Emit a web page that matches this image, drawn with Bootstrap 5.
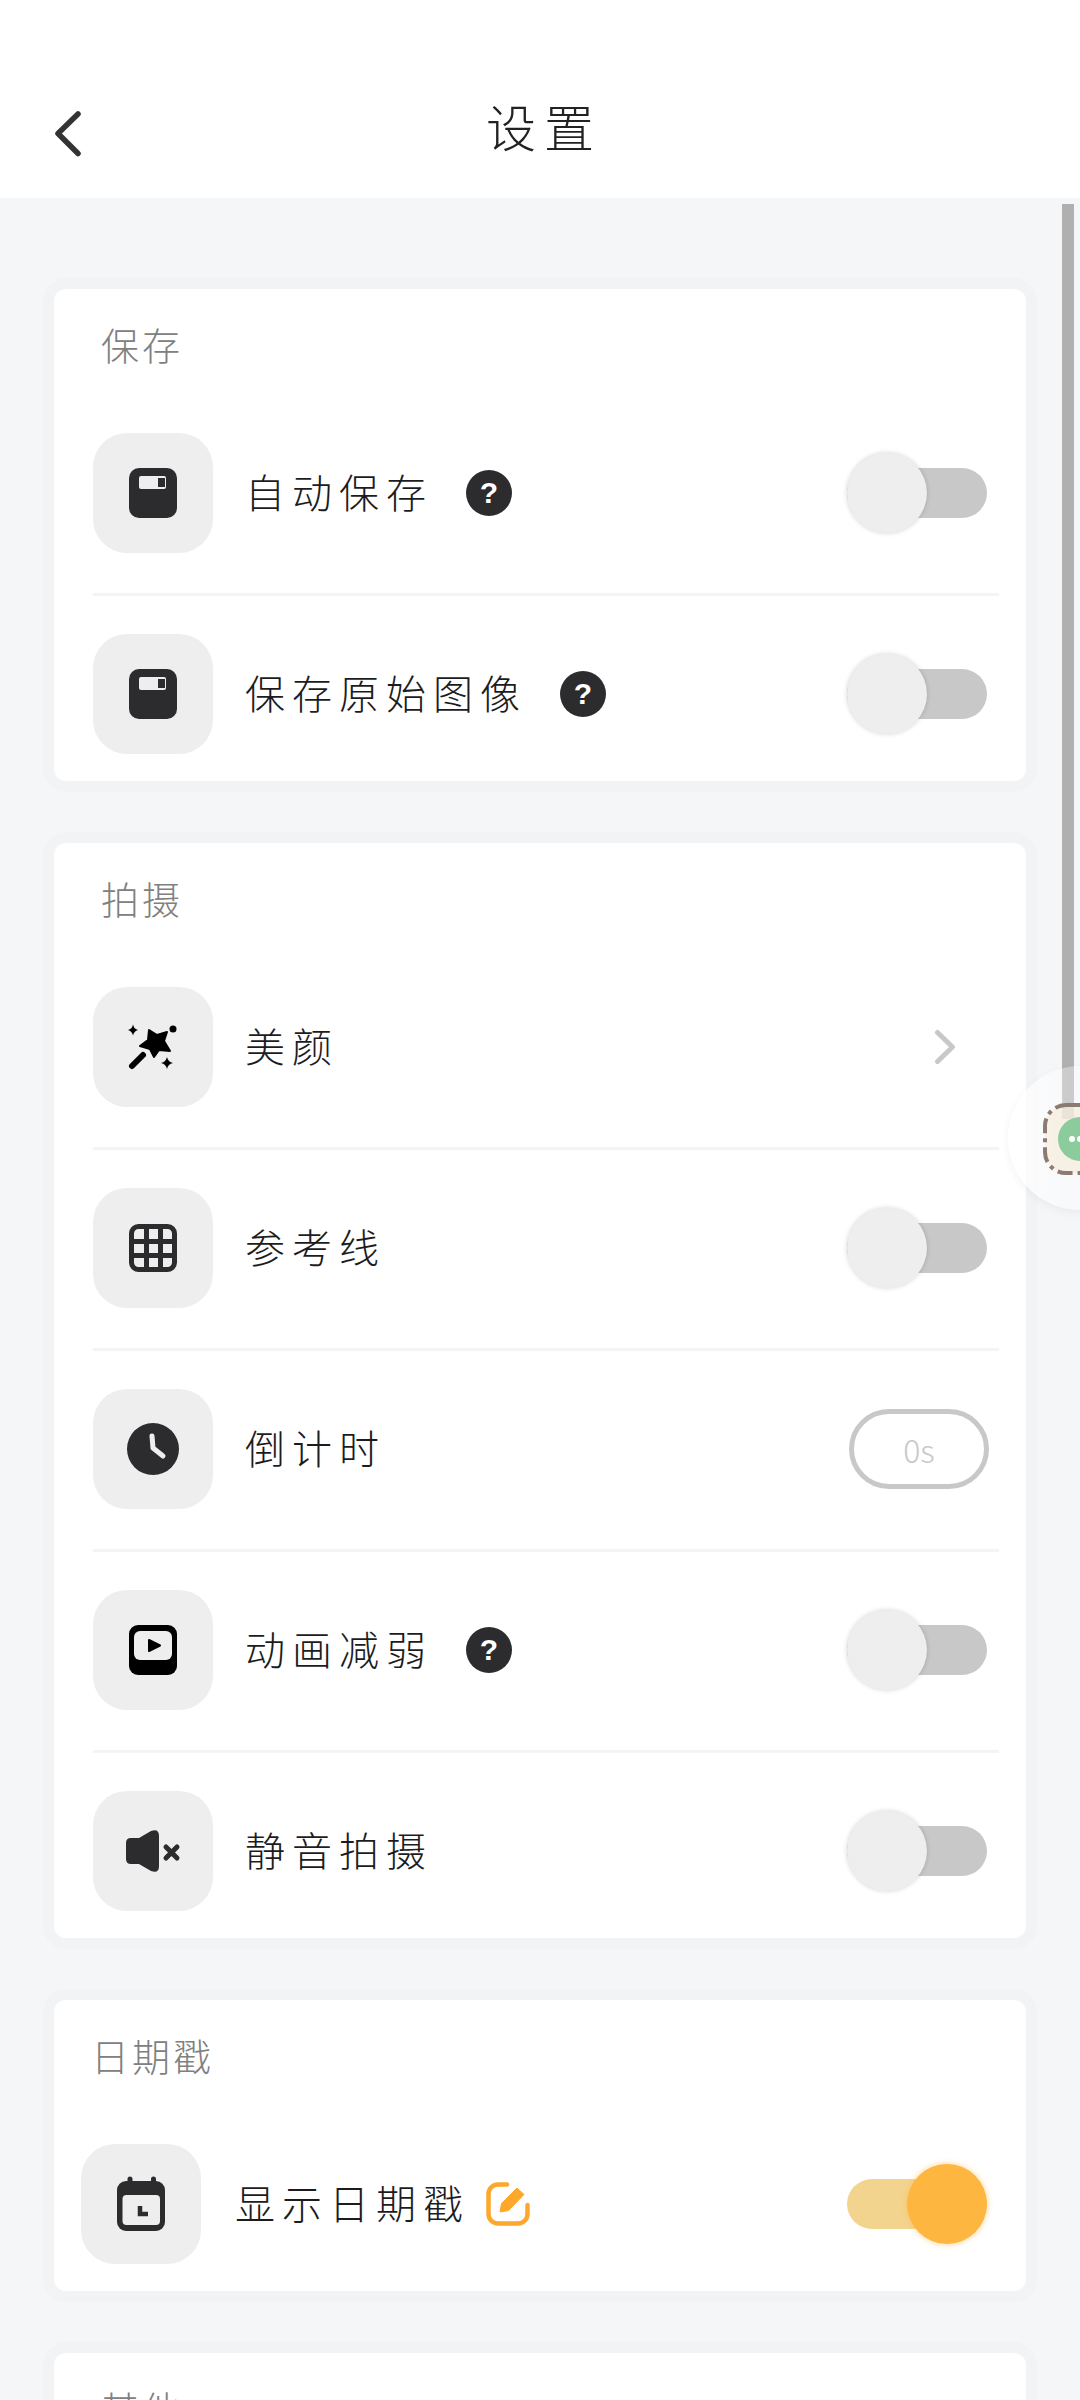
<!doctype html>
<html lang="zh-CN">
<head>
<meta charset="utf-8">
<title>设置</title>
<link rel="stylesheet" href="https://cdn.jsdelivr.net/npm/bootstrap@5.3.0/dist/css/bootstrap.min.css">
<style>
html, body { height: 2400px; overflow: hidden; }
body { background: #f5f6f8; font-family: "Noto Sans CJK SC", "Liberation Sans", sans-serif; font-weight: 300; color: #1c1c1e; position: relative; }
.topbar { height: 198px; background: #fff; padding: 90px 54px 0; }
.topbar-side { width: 60px; }
.topbar-title { font-size: 50px; line-height: 70px; letter-spacing: 8px; margin-right: -8px; color: #222; }
.sheet { padding: 91px 54px 0; gap: 62px; }
.pane { border: 0; border-radius: 12px; background: #fff; box-shadow: 0 0 0 11px #f2f3f5; padding: 0 27px 27px 39px; }
.pane-tight { padding-left: 27px; }
.pane-last { min-height: 300px; }
.pane-title { font-size: 38px; line-height: 56px; letter-spacing: 3px; color: #808080; padding: 27px 0 23px 8px; margin: 0; font-weight: 300; }
.pane-tight .pane-title { padding-left: 10px; }
.set-row { padding: 38px 12px 40px 0; }
.set-row + .set-row { border-top: 3px solid #f4f4f4; }
.set-row:last-child { padding-bottom: 0; }
.tile { width: 120px; height: 120px; border-radius: 34px; background: #eee; flex: none; }
.tile svg { display: block; }
.set-label { font-size: 40px; line-height: 56px; letter-spacing: 7px; margin-left: 32px; padding-bottom: 5px; color: #1c1c1e; white-space: nowrap; }
.pane-tight .set-label { margin-left: 34px; }
.help { width: 46px; height: 46px; border-radius: 50%; background: #2c2c2e; color: #fff; font-family: "Liberation Sans", sans-serif; font-weight: 700; font-size: 30px; line-height: 1; margin-left: 33px; flex: none; }
.edit-mark { margin-left: 16px; flex: none; display: block; }
.tog { width: 140px; height: 80px; position: relative; flex: none; }
.tog::before { content: ""; position: absolute; left: 0; right: 0; top: 15px; height: 50px; border-radius: 25px; background: #c8c8c8; }
.tog::after { content: ""; position: absolute; left: 0; top: 0; width: 80px; height: 80px; border-radius: 50%; background: #eee; box-shadow: 0 0 5px rgba(0,0,0,.18); }
.tog-on::before { background: #f3d48f; }
.tog-on::after { left: 60px; background: #fdb740; box-shadow: 0 0 6px rgba(253,183,64,.6); }
.secs { width: 140px; height: 80px; border: 5px solid #c8c8c8; border-radius: 40px; color: #c8c8c8; font-size: 32px; line-height: 1; flex: none; margin-right: -2px; }
.chev { margin-right: 31px; display: block; }
.scroll-thumb { position: absolute; left: 1062px; top: 204px; width: 12px; height: 915px; background: #b0b0b0; }
.float-ball { position: absolute; left: 1008px; top: 1066px; width: 144px; height: 144px; border-radius: 50%; background: linear-gradient(90deg, rgba(255,255,255,.85), rgba(255,255,255,.35) 40%, rgba(245,246,248,.3)); box-shadow: 0 3px 10px rgba(0,0,0,.05); }
.float-ball svg { position: absolute; left: 33px; top: 35px; display: block; }
</style>
</head>
<body>
<header class="topbar d-flex align-items-start">
  <div class="topbar-side">
    <svg width="30" height="50" viewBox="0 0 30 50" fill="none" stroke="#333" stroke-width="5.500" stroke-linecap="round" stroke-linejoin="round" style="display:block;margin-top:18px"><path d="M24 6 4 25.500l20 20"/></svg>
  </div>
  <div class="flex-grow-1 text-center topbar-title">设置</div>
  <div class="topbar-side"></div>
</header>

<main class="sheet d-flex flex-column">
  <section class="card pane">
    <h2 class="pane-title">保存</h2>
    <div class="set-row d-flex align-items-center">
      <div class="tile"><svg width="120" height="120" viewBox="0 0 120 120"><rect x="36" y="35" width="48" height="50" rx="10" fill="#2c2c2e"/><rect x="46" y="43" width="27" height="13" rx="2" fill="#eee"/><rect x="65" y="45" width="7" height="9" fill="#2c2c2e"/></svg></div>
      <span class="set-label">自动保存</span>
      <span class="help d-flex align-items-center justify-content-center">?</span>
      <span class="tog ms-auto"></span>
    </div>
    <div class="set-row d-flex align-items-center">
      <div class="tile"><svg width="120" height="120" viewBox="0 0 120 120"><rect x="36" y="35" width="48" height="50" rx="10" fill="#2c2c2e"/><rect x="46" y="43" width="27" height="13" rx="2" fill="#eee"/><rect x="65" y="45" width="7" height="9" fill="#2c2c2e"/></svg></div>
      <span class="set-label">保存原始图像</span>
      <span class="help d-flex align-items-center justify-content-center">?</span>
      <span class="tog ms-auto"></span>
    </div>
  </section>

  <section class="card pane">
    <h2 class="pane-title">拍摄</h2>
    <div class="set-row d-flex align-items-center">
      <div class="tile"><svg width="120" height="120" viewBox="0 0 120 120"><path d="M56 43 64 48 74 45 71 54 77 64 66 63 61 70 57 62 47 59 55 53Z" fill="#000" stroke="#000" stroke-width="2" stroke-linejoin="round"/><path d="M39 79 50 68" stroke="#000" stroke-width="6" stroke-linecap="round"/><path d="M40 37.500q1 4.500 5 5.500q-4 1-5 5.500q-1-4.500-5-5.500q4-1 5-5.500Z" fill="#000"/><circle cx="80" cy="42" r="3.500" fill="#000"/><path d="M74 70q1 5 6 6q-5 1-6 6q-1-5-6-6q5-1 6-6Z" fill="#000"/></svg></div>
      <span class="set-label">美颜</span>
      <svg class="chev ms-auto" width="22" height="36" viewBox="0 0 22 36" fill="none" stroke="#c8c8c8" stroke-width="5" stroke-linecap="round" stroke-linejoin="round"><path d="M3.500 3.500 18.500 18 3.500 32.500"/></svg>
    </div>
    <div class="set-row d-flex align-items-center">
      <div class="tile"><svg width="120" height="120" viewBox="0 0 120 120" fill="none" stroke="#2c2c2e" stroke-width="5"><rect x="38.500" y="38.500" width="43" height="43" rx="7"/><path d="M53.500 38v44M67.500 38v44M38 53.500h44M38 67.500h44"/></svg></div>
      <span class="set-label">参考线</span>
      <span class="tog ms-auto"></span>
    </div>
    <div class="set-row d-flex align-items-center">
      <div class="tile"><svg width="120" height="120" viewBox="0 0 120 120"><circle cx="60" cy="60" r="26" fill="#2c2c2e"/><path d="M59 47 60 59 70 67" fill="none" stroke="#eee" stroke-width="5" stroke-linecap="round" stroke-linejoin="round"/></svg></div>
      <span class="set-label">倒计时</span>
      <span class="secs ms-auto d-flex align-items-center justify-content-center">0s</span>
    </div>
    <div class="set-row d-flex align-items-center">
      <div class="tile"><svg width="120" height="120" viewBox="0 0 120 120"><rect x="36" y="35" width="48" height="50" rx="9" fill="#000"/><rect x="41" y="41" width="38" height="29" rx="6" fill="#eee"/><path d="M56 50 67 55.500 56 61Z" fill="#000" stroke="#000" stroke-width="2" stroke-linejoin="round"/></svg></div>
      <span class="set-label">动画减弱</span>
      <span class="help d-flex align-items-center justify-content-center">?</span>
      <span class="tog ms-auto"></span>
    </div>
    <div class="set-row d-flex align-items-center">
      <div class="tile"><svg width="120" height="120" viewBox="0 0 120 120"><path d="M38 47h8l12-7q8-3 8 5v30q0 8-8 5l-12-7h-8q-5 0-5-5V52q0-5 5-5Z" fill="#2c2c2e"/><path d="M73 56l11 11M84 56 73 67" stroke="#2c2c2e" stroke-width="5" stroke-linecap="round"/></svg></div>
      <span class="set-label">静音拍摄</span>
      <span class="tog ms-auto"></span>
    </div>
  </section>

  <section class="card pane pane-tight">
    <h2 class="pane-title">日期戳</h2>
    <div class="set-row d-flex align-items-center">
      <div class="tile"><svg width="120" height="120" viewBox="0 0 120 120"><rect x="36" y="37" width="48" height="50" rx="9" fill="#2c2c2e"/><path d="M49 35v6M72.500 35v6" stroke="#2c2c2e" stroke-width="5" stroke-linecap="round"/><rect x="41.500" y="51" width="37.500" height="30" rx="4" fill="#eee"/><path d="M59 62v8h8" fill="none" stroke="#2c2c2e" stroke-width="4.500"/></svg></div>
      <span class="set-label">显示日期戳</span>
      <svg class="edit-mark" width="44" height="44" viewBox="0 0 44 44" fill="none"><path d="M21 2.500H12A9.500 9.500 0 0 0 2.500 12v20A9.500 9.500 0 0 0 12 41.500h20a9.500 9.500 0 0 0 9.500-9.500v-9" stroke="#fda82a" stroke-width="4.500" stroke-linecap="round"/><path d="M14 30l1.500-8.500L31 6l7 6.500L22.500 28.500Z" fill="#fda82a" stroke="#fda82a" stroke-width="1" stroke-linejoin="round"/></svg>
      <span class="tog tog-on ms-auto"></span>
    </div>
  </section>

  <section class="card pane pane-last">
    <h2 class="pane-title">其他</h2>
  </section>
</main>

<div class="scroll-thumb"></div>
<div class="float-ball">
  <svg width="80" height="76" viewBox="0 0 80 76">
    <rect x="4" y="4" width="72" height="68" rx="21" fill="#f7ecdc" fill-opacity=".7" stroke="#8b7b70" stroke-width="4" stroke-dasharray="15 5 4 5"/>
    <circle cx="39" cy="38" r="22" fill="#8ccc9c"/>
    <circle cx="31" cy="38" r="3" fill="#fff"/><circle cx="39" cy="38" r="3" fill="#fff"/><circle cx="47" cy="38" r="3" fill="#fff"/>
  </svg>
</div>

<script src="https://cdn.jsdelivr.net/npm/bootstrap@5.3.0/dist/js/bootstrap.bundle.min.js"></script>
</body>
</html>
